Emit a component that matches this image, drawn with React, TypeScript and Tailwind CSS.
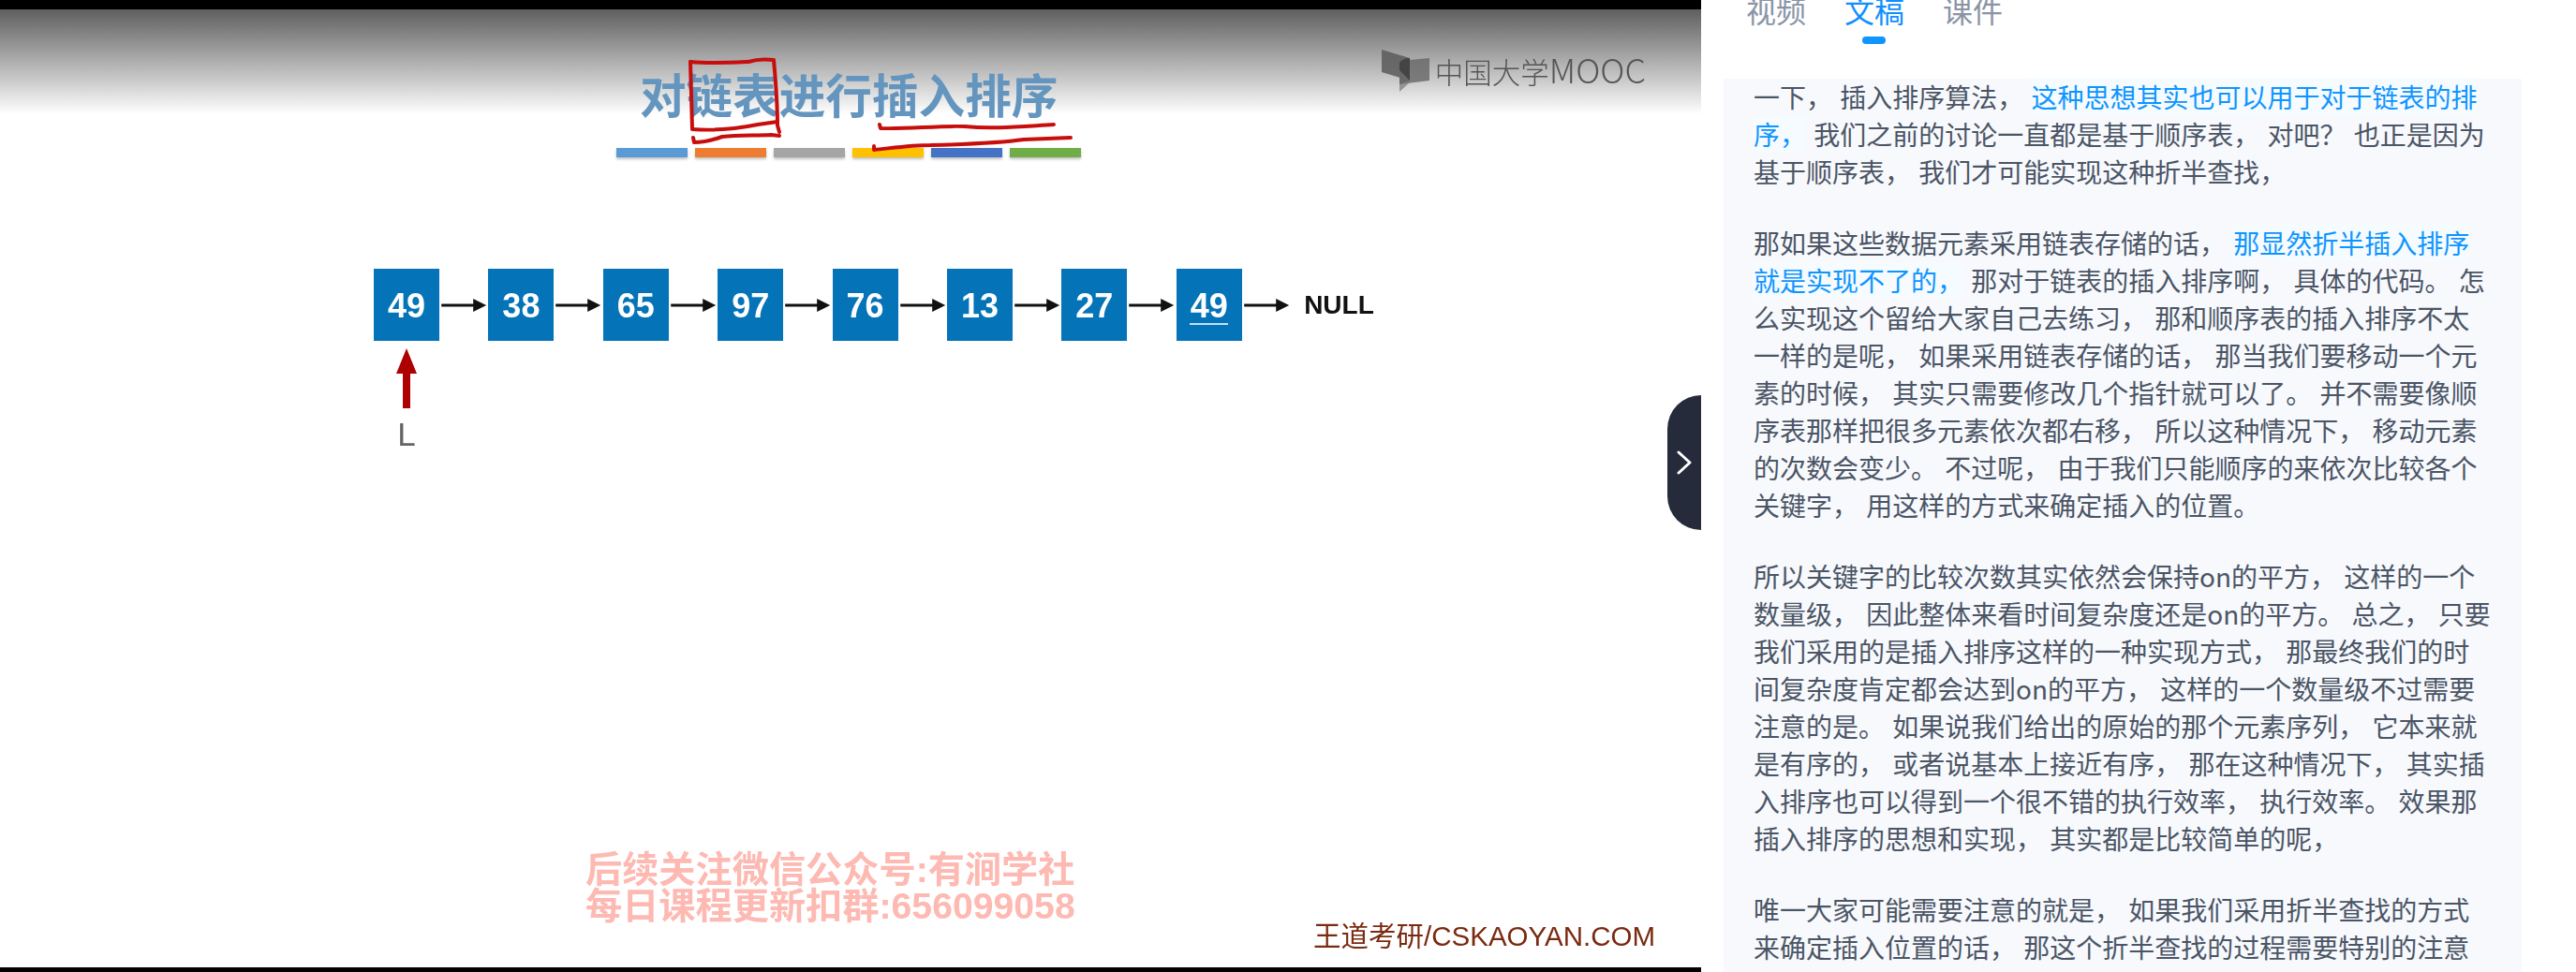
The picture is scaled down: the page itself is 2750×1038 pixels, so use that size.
const NODES = ["49", "38", "65", "97", "76", "13", "27", "49"];
const BARS = ["bg-[#5b9bd5]", "bg-[#ed7d31]", "bg-[#a5a5a5]", "bg-[#ffc000]", "bg-[#4472c4]", "bg-[#70ad47]"];

function Arrow({ className }: { className: string }) {
  return (
    <svg className={className} height="16" viewBox="0 0 52 16" fill="none">
      <path d="M2 8h36" stroke="#111" strokeWidth="3" />
      <path d="M36 1l14 7-14 7z" fill="#111" />
    </svg>
  );
}

function MoocLogo() {
  return (
    <svg width="52" height="45" viewBox="0 0 52 45" className="shrink-0">
      <path d="M0 0l30 9v24L0 24z" fill="#5a5a5a" opacity="0.85" />
      <path d="M19 12l32-3v24l-32 4z" fill="#666" opacity="0.8" />
      <path d="M19 14c3-4 7-5 11-5v24l-11 4z" fill="#3c3c3c" opacity="0.8" />
      <path d="M19 22l12 12-12 11z" fill="#777" opacity="0.7" />
    </svg>
  );
}

// pen strokes the lecturer drew over the slide
function Annotations() {
  return (
    <svg className="absolute left-0 top-[-10px] pointer-events-none" width="1816" height="200" fill="none">
      <g stroke="#c80d0d" strokeWidth="4" strokeLinecap="round" strokeLinejoin="round">
        <path d="M737 66c20 2 40 1 62 0 9-3 18-3 27-2 2 22 4 46 4 70l2 7" />
        <path d="M737 66l2 72c26 2 50-1 70-5l21-3" />
        <path d="M740 147l1 5c10 0 18-2 30-6 18-2 36-1 52-2l9 1" />
        <path d="M939 133l1 4c30 1 60-3 90-2 30 3 60 0 95-2" />
        <path d="M933 156v4c20-2 40-5 60-5 40-1 72-2 100-6l50-2" />
      </g>
    </svg>
  );
}

function Slide() {
  return (
    <div className="relative w-[1816px] h-full flex flex-col bg-white shrink-0">
      <div className="h-[10px] bg-black shrink-0" />
      <div className="relative flex-1 flex flex-col blur-[0.6px] bg-[linear-gradient(#5f5f5f_0px,#c9c9c9_75px,#ffffff_112px)]">
        <div className="flex items-start h-[148px] pl-[683px]">
          <div className="mt-[64px] text-[49.6px] leading-[60px] font-bold text-[#6495be] whitespace-nowrap font-['Liberation_Sans','Noto_Sans_CJK_SC',sans-serif]">
            对链表进行插入排序
          </div>
          <div className="ml-auto mr-[59px] mt-[43px] flex items-start gap-[5px] text-[#555555]">
            <MoocLogo />
            <span className="mt-[-2px] text-[30.5px] leading-[44px] font-light whitespace-nowrap font-['Noto_Sans_CJK_SC',sans-serif]">
              中国大学<span className="text-[36px]">MOOC</span>
            </span>
          </div>
        </div>
        <div className="flex pl-[658px] gap-[8px]">
          {BARS.map((c) => (
            <div key={c} className={`${c} w-[76px] h-[10px] shadow-[0_2px_3px_rgba(0,0,0,0.25)]`} />
          ))}
        </div>
        <div className="flex items-center pl-[399px] mt-[119px] font-['Liberation_Sans',sans-serif]">
          {NODES.map((n, i) => (
            <div key={i} className="flex items-center">
              <div className="relative w-[70px] h-[77px] pt-[2px] bg-[#0473b8] flex items-center justify-center text-white text-[36px] font-bold">
                {n}
                {i === NODES.length - 1 && <div className="absolute left-[14px] top-[58px] w-[41px] h-[2px] bg-[#bfe3f7]" />}
              </div>
              <Arrow className="w-[52.4px]" />
            </div>
          ))}
          <span className="ml-[14px] text-[28px] font-bold text-[#111]">NULL</span>
        </div>
        <div className="flex flex-col items-center w-[24px] ml-[422px] mt-[8px] font-['Liberation_Sans',sans-serif]">
          <svg width="24" height="64" viewBox="0 0 24 64" className="shrink-0">
            <path d="M12 0l11 27h-7v37H8V27H1z" fill="#ae0000" />
          </svg>
          <span className="mt-[8px] text-[35px] leading-[40px] text-[#666] font-light">L</span>
        </div>
        <div className="mt-auto pl-[625px] text-[39.2px] leading-[39px] font-bold text-[#fdb9b2] whitespace-nowrap font-['Liberation_Sans','Noto_Sans_CJK_SC',sans-serif]">
          <div>后续关注微信公众号:有涧学社</div>
          <div>每日课程更新扣群:656099058</div>
        </div>
        <div className="self-end mr-[49px] mt-[-4px] mb-[16px] text-[29.5px] leading-[34px] text-[#7a2a10] whitespace-nowrap font-['Liberation_Sans','Noto_Sans_CJK_SC',sans-serif]">
          王道考研/CSKAOYAN.COM
        </div>
        <Annotations />
      </div>
      <div className="h-[5px] bg-black shrink-0" />
      <button className="absolute right-0 top-[422px] w-[36px] h-[144px] rounded-l-[36px] bg-[#252b3a] flex items-center justify-center">
        <svg width="16" height="26" viewBox="0 0 16 26" fill="none" stroke="#fff" strokeWidth="3" strokeLinecap="round" strokeLinejoin="round">
          <path d="M2 2l12 11-12 11" />
        </svg>
      </button>
    </div>
  );
}

function Hl({ children }: { children: string }) {
  return <span className="text-[#0f95ff] bg-[#f6fbff]">{children}</span>;
}

function Transcript() {
  return (
    <aside className="flex-1 h-full flex flex-col overflow-hidden bg-white font-['Noto_Sans_CJK_SC',sans-serif]">
      <div className="flex gap-[41px] pl-[48px] h-[84px] shrink-0 -mt-[10px] text-[32px] leading-[40px] text-[#8a94a6]">
        <span>视频</span>
        <span className="relative text-[#0f8fff]">
          文稿
          <i className="absolute left-[19px] top-[49px] w-[25px] h-[8px] rounded-full bg-[#0f95ff]" />
        </span>
        <span>课件</span>
      </div>
      <div className="mt-[10px] ml-[24px] w-[852px] flex-1 bg-[#f7f9fd] pl-[32px] pt-0 text-[28px] leading-[40px] text-[#4b5565] [word-spacing:2px]">
        <div className="w-[790px] flex flex-col gap-[36px] -mt-[1px]">
          <p>
            一下， 插入排序算法， <Hl>这种思想其实也可以用于对于链表的排序，</Hl> 我们之前的讨论一直都是基于顺序表， 对吧？ 也正是因为基于顺序表， 我们才可能实现这种折半查找，
          </p>
          <p>
            那如果这些数据元素采用链表存储的话， <Hl>那显然折半插入排序就是实现不了的，</Hl> 那对于链表的插入排序啊， 具体的代码。 怎么实现这个留给大家自己去练习， 那和顺序表的插入排序不太一样的是呢， 如果采用链表存储的话， 那当我们要移动一个元素的时候， 其实只需要修改几个指针就可以了。 并不需要像顺序表那样把很多元素依次都右移， 所以这种情况下， 移动元素的次数会变少。 不过呢， 由于我们只能顺序的来依次比较各个关键字， 用这样的方式来确定插入的位置。
          </p>
          <p>
            所以关键字的比较次数其实依然会保持on的平方， 这样的一个数量级， 因此整体来看时间复杂度还是on的平方。 总之， 只要我们采用的是插入排序这样的一种实现方式， 那最终我们的时间复杂度肯定都会达到on的平方， 这样的一个数量级不过需要注意的是。 如果说我们给出的原始的那个元素序列， 它本来就是有序的， 或者说基本上接近有序， 那在这种情况下， 其实插入排序也可以得到一个很不错的执行效率， 执行效率。 效果那插入排序的思想和实现， 其实都是比较简单的呢，
          </p>
          <p>
            唯一大家可能需要注意的就是， 如果我们采用折半查找的方式来确定插入位置的话， 那这个折半查找的过程需要特别的注意
          </p>
        </div>
      </div>
    </aside>
  );
}

export default function App() {
  return (
    <div className="flex w-[2750px] h-[1038px] overflow-hidden bg-white">
      <Slide />
      <Transcript />
    </div>
  );
}
